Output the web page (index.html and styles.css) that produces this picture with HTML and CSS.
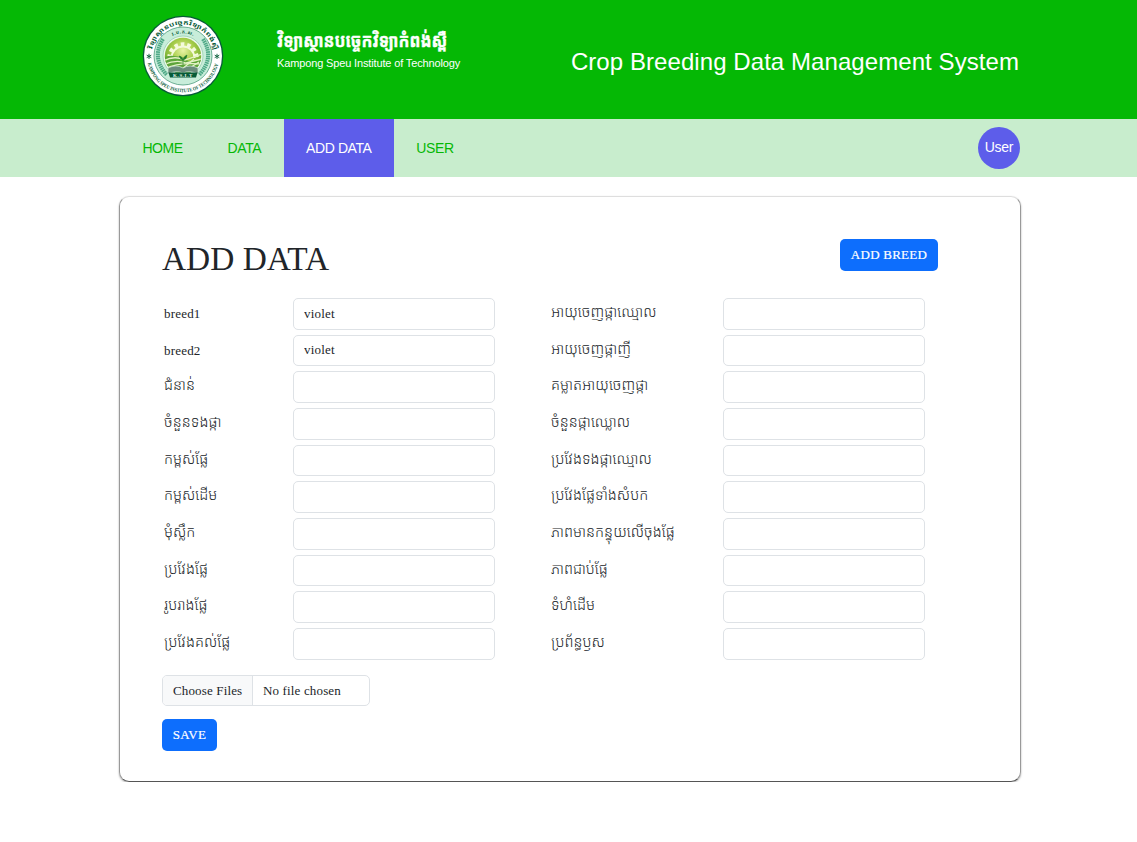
FILE: index.html
```html
<!DOCTYPE html>
<html lang="km">
<head>
<meta charset="utf-8">
<title>Crop Breeding Data Management System</title>
<link rel="stylesheet" href="styles.css">
</head>
<body>
<header class="banner">
  <svg class="logo" viewBox="0 0 82 82" role="img" aria-label="Kampong Speu Institute of Technology">
    <defs>
      <path id="arcTop" d="M10 35.5 A31.5 31.5 0 0 1 72 35.5"/>
      <path id="arcBottom" d="M5.5 47.2 A36 36 0 0 0 76.5 47.2"/>
      <path id="arcInner" d="M21 30.5 A22.6 22.6 0 0 1 61 30.5"/>
      <radialGradient id="field" cx=".5" cy=".35" r=".6"><stop offset="0" stop-color="#e9f3a5"/><stop offset=".5" stop-color="#a9ce4c"/><stop offset="1" stop-color="#6aa62c"/></radialGradient>
      <clipPath id="disc"><circle cx="41" cy="41" r="18.2"/></clipPath>
    </defs>
    <circle cx="41" cy="41" r="40.3" fill="#075b38"/>
    <circle cx="41" cy="41" r="39" fill="#fff"/>
    <circle cx="41" cy="41" r="29" fill="#c8edda" stroke="#4c9c7c" stroke-width=".8"/>
    <g fill="none" stroke="#4fa987" stroke-width="4" stroke-dasharray="1.6 .6">
      <path d="M21 24 Q9 43 25 60"/><path d="M61 24 Q73 43 57 60"/>
    </g>
    <circle cx="41" cy="41" r="20" fill="#eaf8ec" stroke="#8ccaa8" stroke-width=".7"/>
    <circle cx="41" cy="41" r="18.2" fill="url(#field)"/>
    <path d="M27.5 43 A13.5 13.5 0 0 1 54.5 43" fill="none" stroke="#f4fadb" stroke-width="4.5" stroke-dasharray="3.5 2.8"/>
    <path d="M29.5 43 A11.5 11.5 0 0 1 52.5 43" fill="none" stroke="#f4fadb" stroke-width="2"/>
    <g clip-path="url(#disc)">
      <path d="M20 43 Q31 38 42 44 T62 42 V62 H20Z" fill="#5da53a"/>
      <g fill="none" stroke="#e4f2c5" stroke-width="1.3"><path d="M21 46 Q32 40 43 45 L60 39"/><path d="M21 50 Q34 44 44 48 L60 44"/><path d="M22 54 Q36 47 60 49"/><path d="M39 55 L52 44 M43 56 L57 47"/></g>
    </g>
    <path d="M41 50 V42 M41 45 Q38 44 37 41 Q40 41 41 45 Q42 41 45 40 Q45 44 41 45" fill="#247b2e" stroke="#247b2e" stroke-width=".6"/>
    <path d="M26 53 Q34 49 41 53 Q48 49 56 53 V59 Q48 55 41 58 Q34 55 26 59Z" fill="#6b8c7c" stroke="#d9ece1" stroke-width=".7"/>
    <path d="M26.5 57.5 H55.5 L54 62.5 H28Z" fill="#075b38"/>
    <text class="seal-ribbon" x="41" y="61.7" text-anchor="middle">K.S.I.T</text>
    <text class="seal-khmer"><textPath href="#arcTop" startOffset="1" textLength="86" lengthAdjust="spacingAndGlyphs">វិទ្យាស្ថានបច្ចេកវិទ្យាកំពង់ស្ពឺ</textPath></text>
    <text class="seal-inner"><textPath href="#arcInner" startOffset="50%" text-anchor="middle">វ.ប.ក.ស.</textPath></text>
    <text class="seal-latin"><textPath href="#arcBottom" startOffset="1" textLength="98" lengthAdjust="spacingAndGlyphs">KAMPONG SPEU INSTITUTE OF TECHNOLOGY</textPath></text>
    <g stroke="#075b38" stroke-width=".9"><path d="M7 38.8V44M4.7 40.1L9.3 42.7M4.7 42.7L9.3 40.1"/><path d="M75 38.8V44M72.7 40.1L77.3 42.7M72.7 42.7L77.3 40.1"/></g>
  </svg>
  <div class="institute">
    <div class="institute-km">វិទ្យាស្ថានបច្ចេកវិទ្យាកំពង់ស្ពឺ</div>
    <div class="institute-en">Kampong Speu Institute of Technology</div>
  </div>
  <div class="system-name">Crop Breeding Data Management System</div>
</header>
<nav class="nav">
  <a class="nav-link">HOME</a><a class="nav-link">DATA</a><a class="nav-link active">ADD DATA</a><a class="nav-link">USER</a>
  <div class="avatar">User</div>
</nav>
<main class="card">
  <div class="card-head"><h1 class="title">ADD DATA</h1><button class="btn btn-breed">ADD BREED</button></div>
  <form class="columns">
    <div class="fields fields-left">
      <label class="latin">breed1</label><input class="input" value="violet">
      <label class="latin">breed2</label><input class="input" value="violet">
      <label>ជំនាន់</label><input class="input">
      <label>ចំនួនទងផ្កា</label><input class="input">
      <label>កម្ពស់ផ្លែ</label><input class="input">
      <label>កម្ពស់ដើម</label><input class="input">
      <label>មុំស្លឹក</label><input class="input">
      <label>ប្រវែងផ្លែ</label><input class="input">
      <label>រូបរាងផ្លែ</label><input class="input">
      <label>ប្រវែងគល់ផ្លែ</label><input class="input">
    </div>
    <div class="fields fields-right">
      <label>អាយុចេញផ្កាឈ្មោល</label><input class="input">
      <label>អាយុចេញផ្កាញី</label><input class="input">
      <label>គម្លាតអាយុចេញផ្កា</label><input class="input">
      <label>ចំនួនផ្កាឈ្លោល</label><input class="input">
      <label>ប្រវែងទងផ្កាឈ្មោល</label><input class="input">
      <label>ប្រវែងផ្លែទាំងសំបក</label><input class="input">
      <label>ភាពមានកន្ទុយលើចុងផ្លែ</label><input class="input">
      <label>ភាពជាប់ផ្លែ</label><input class="input">
      <label>ទំហំដើម</label><input class="input">
      <label>ប្រព័ន្ធឫស</label><input class="input">
    </div>
  </form>
  <div class="file"><span class="file-button">Choose Files</span><span class="file-status">No file chosen</span></div>
  <button class="btn btn-save">SAVE</button>
</main>
</body>
</html>
```
FILE: styles.css
```css
* { box-sizing: border-box; }
body { margin: 0; background: #fff; color: #212529; font-family: "Liberation Serif", "Noto Sans Khmer", "Khmer OS", "DejaVu Sans", serif; font-size: 14px; }
.banner { height: 119px; background: #05b805; color: #fff; display: flex; align-items: flex-start; padding: 15px 118px 0 142px; font-family: "Liberation Sans", "Noto Sans Khmer", sans-serif; }
.logo { width: 82px; height: 82px; flex: none; }
.seal-khmer { font: bold 6px "Noto Sans Khmer", "Liberation Sans", sans-serif; fill: #075b38; }
.seal-inner { font: bold 4.6px "Noto Sans Khmer", "Liberation Sans", sans-serif; fill: #075b38; letter-spacing: .5px; }
.seal-latin { font: bold 5.2px "Liberation Serif", serif; fill: #075b38; }
.seal-ribbon { font: bold 5px "Liberation Serif", serif; fill: #e4f2e9; letter-spacing: .6px; }
.institute { width: 184px; padding: 12px 0 0; margin-left: 53px; white-space: nowrap; }
.institute-km { height: 28px; line-height: 28px; font-size: 18px; font-weight: 700; -webkit-text-stroke: .4px #fff; transform: scaleX(.897); transform-origin: left; }
.institute-en { font-size: 11px; line-height: 16px; letter-spacing: -.14px; }
.system-name { margin-left: auto; padding-top: 32px; font-size: 24px; line-height: 30px; letter-spacing: .07px; white-space: nowrap; }
.nav { height: 58px; background: #c8edcd; display: flex; align-items: center; padding: 0 117px 0 120px; font-family: "Liberation Sans", sans-serif; }
.nav-link { height: 58px; line-height: 58px; padding: 0 22.4px; font-size: 14px; letter-spacing: -.4px; color: #05b805; white-space: nowrap; }
.nav-link.active { background: #5d5dea; color: #fff; }
.avatar { width: 42px; height: 42px; margin-left: auto; border-radius: 50%; background: #5d5dea; color: #fff; font-size: 14px; letter-spacing: -.3px; line-height: 41px; text-align: center; }
.card { width: 902px; height: 586px; margin: 19px 0 0 119px; padding: 42px 82px 0 42px; border: 1px solid #dee2e6; border-color: #dedede #999 #555 #999; border-radius: 10px; box-shadow: 0 1px 2px rgba(0,0,0,.35); }
.card-head { display: flex; justify-content: space-between; align-items: flex-start; height: 59px; }
.title { margin: 0; font-size: 33.4px; line-height: 40px; font-weight: 400; white-space: nowrap; }
.btn { height: 32px; padding: 0; border: 0; border-radius: 5px; background: #0d6efd; color: #fff; font-family: "Liberation Serif", serif; font-size: 13px; letter-spacing: .25px; -webkit-text-stroke: .2px #fff; }
.btn-breed { width: 98px; }
.btn-save { display: block; width: 55px; margin-top: 13px; }
.columns { display: flex; margin: 0; }
.fields { display: grid; grid-template-rows: repeat(10, 31.67px); row-gap: 5px; align-items: stretch; }
.fields-left { grid-template-columns: 129px 202px; padding-left: 2px; }
.fields-right { grid-template-columns: 172px 202px; margin-left: 56px; }
.fields label { line-height: 29px; font-size: 14.7px; font-weight: 300; white-space: nowrap; }
.fields .latin { line-height: 31px; font-size: 13px; font-weight: 400; letter-spacing: .2px; }
.input { width: 202px; min-width: 0; height: 31.67px; padding: 0 10px; border: 1px solid #dee2e6; border-radius: 5px; background: #fff; color: #212529; font-family: "Liberation Serif", serif; font-size: 13px; letter-spacing: .2px; }
.file { display: flex; width: 208px; height: 31px; margin-top: 15px; border: 1px solid #dee2e6; border-radius: 5px; overflow: hidden; line-height: 30px; font-size: 13px; white-space: nowrap; letter-spacing: .15px; }
.file-button { width: 90px; padding-left: 10px; background: #f8f9fa; border-right: 1px solid #dee2e6; }
.file-status { padding-left: 10px; }
```
